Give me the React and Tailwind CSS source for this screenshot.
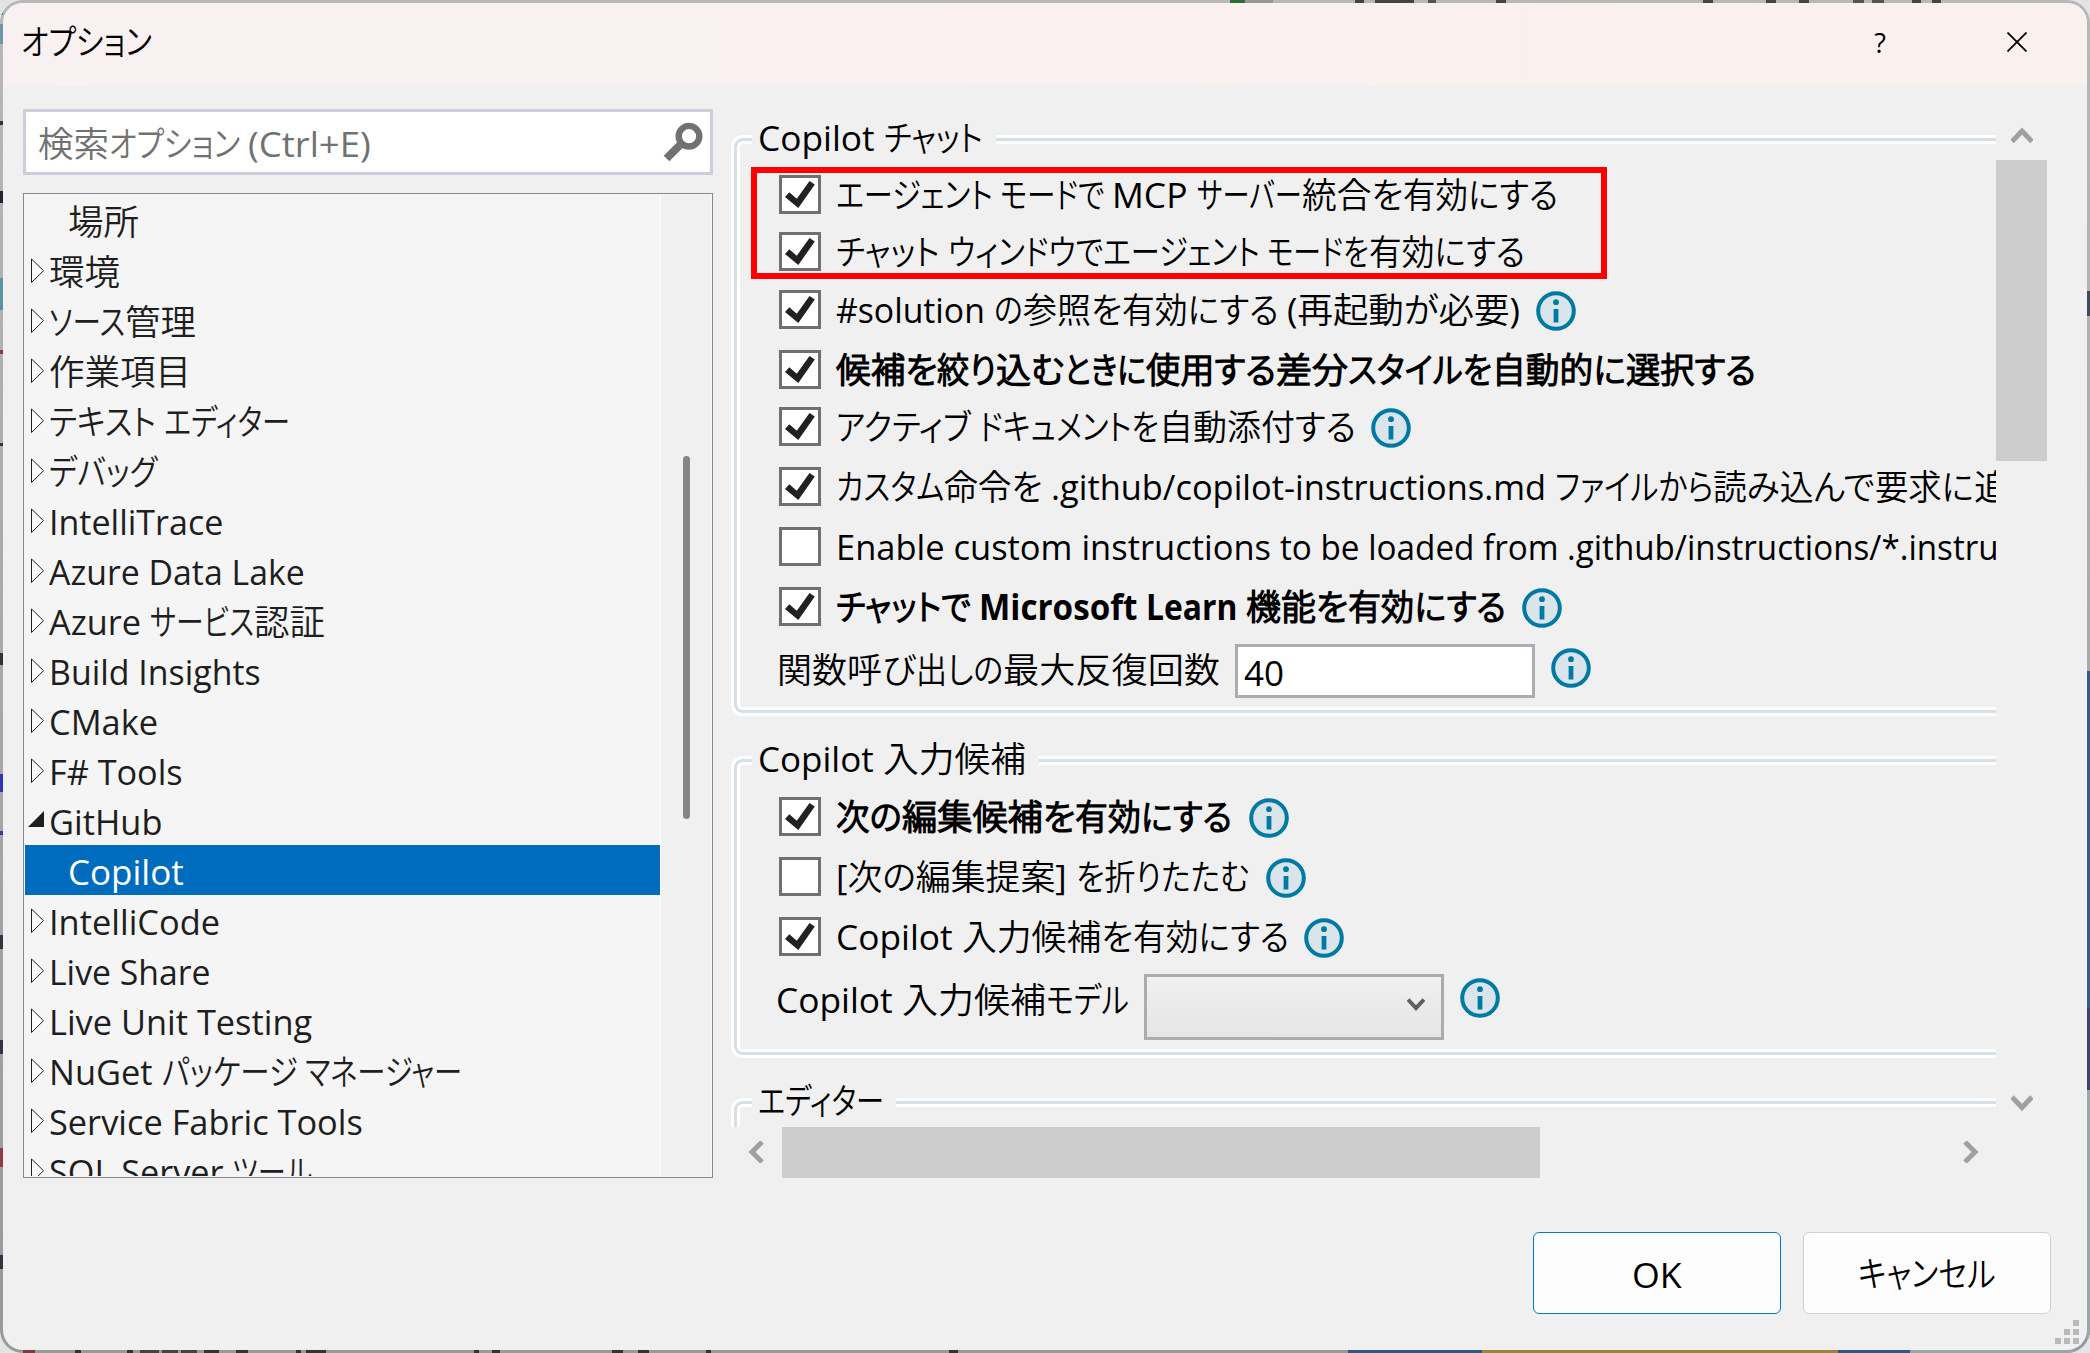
import { useLayoutEffect, useRef } from "react";

const FONT = "font-['Open_Sans','Noto_Sans_CJK_JP_DemiLight','Noto_Sans_CJK_JP',sans-serif]";

/* One run of text condensed or widened to a given width. */
function Fit({ w, className = "", children }) {
  const ref = useRef(null);
  useLayoutEffect(() => {
    const run = () => {
      const el = ref.current;
      if (!el) return;
      const natural = el.offsetWidth;
      if (natural) el.style.transform = `scaleX(${w / natural})`;
    };
    run();
    document.fonts?.ready.then(run);
  }, [w]);
  return (
    <span className="block shrink-0" style={{ width: w }}>
      <span ref={ref} className={"inline-block origin-left whitespace-pre [font-feature-settings:'palt'] " + className}>
        {children}
      </span>
    </span>
  );
}

/* A line made of consecutive runs: [text, width] pairs. */
function Line({ runs, className = "text-[35px] leading-[50px]" }) {
  return (
    <span className="flex shrink-0">
      {runs.map(([text, w], i) => (
        <Fit key={i} w={w} className={className}>{text}</Fit>
      ))}
    </span>
  );
}

const tree = [
  [[["場所", 71]], "leaf"],
  [[["環境", 71]]],
  [[["ソース", 76], ["管理", 71]]],
  [[["作業項目", 142]]],
  [[["テキスト ", 115], ["エディター", 126]]],
  [[["デバッグ", 108]]],
  [[["IntelliTrace", 174]]],
  [[["Azure Data Lake", 256]]],
  [[["Azure ", 101], ["サービス", 104], ["認証", 71]]],
  [[["Build Insights", 212]]],
  [[["CMake", 109]]],
  [[["F# Tools", 134]]],
  [[["GitHub", 113]], "open"],
  [[["Copilot", 116]], "selected"],
  [[["IntelliCode", 171]]],
  [[["Live Share", 161]]],
  [[["Live Unit Testing", 263]]],
  [[["NuGet ", 113], ["パッケージ ", 143], ["マネージャー", 157]]],
  [[["Service Fabric Tools", 314]]],
  [[["SQL Server ", 183], ["ツール", 80]]],
];

function TreeRow({ runs, kind }) {
  const child = kind === "leaf" || kind === "selected";
  return (
    <div
      className={
        "flex h-[50px] shrink-0 " +
        (kind === "selected" ? "bg-[#006cbe] text-white " : "text-[#1e1e1e] ") +
        (child ? "pl-[43px]" : "pl-[3px]")
      }
    >
      {!child && (
        <svg className="h-[50px] w-[21px] shrink-0" viewBox="0 0 21 50">
          {kind === "open" ? (
            <path d="M0 32H16V16Z" fill="#1e1e1e" />
          ) : (
            <path d="M3.5 14V37.5L15.5 25.7Z" fill="#fff" stroke="#1e1e1e" strokeWidth="1" />
          )}
        </svg>
      )}
      <Line runs={runs} className="text-[35px] leading-[54px]" />
    </div>
  );
}

function Info({ className = "" }) {
  return (
    <svg className={"size-10 shrink-0 " + className} viewBox="0 0 40 40">
      <circle cx="20" cy="20" r="17.8" fill="#d9e5ea" stroke="#007aa5" strokeWidth="4" />
      <circle cx="20" cy="11.2" r="2.9" fill="#007aa5" />
      <path d="M17.6 18H22.4V31.5H17.6Z" fill="#007aa5" />
    </svg>
  );
}

function Check({ on }) {
  return (
    <span className="h-[39px] w-[42px] shrink-0 border-3 border-[#707070] bg-white">
      {on && (
        <svg viewBox="0 0 36 33" className="h-[33px] w-9">
          <path d="M3 19L7.3 14.2L14.8 20.8L27.5 3L32.8 6.5L16.3 30Z" fill="#212121" />
        </svg>
      )}
    </span>
  );
}

function Option({ top, on = true, runs, bold, info }) {
  return (
    <div className={"flex h-[39px] shrink-0 " + top}>
      <Check on={on} />
      <div className="flex h-10 items-center pl-[15px]">
        <Line runs={runs} className={"text-[35px] leading-[50px] " + (bold ? "font-bold" : "")} />
        {info && <Info className={"mt-0.5 " + info} />}
      </div>
    </div>
  );
}

/* Group frame: white / blue-grey / white line, open at the right edge. */
function Frame({ className, children }) {
  return (
    <div className={"shrink-0 rounded-l-[12px] border-3 border-r-0 border-white " + className}>
      <div className="h-full rounded-l-[9px] border-3 border-r-0 border-[#d5dfe5]">
        <div className="flex h-full flex-col rounded-l-[6px] border-3 border-r-0 border-white">{children}</div>
      </div>
    </div>
  );
}

function Legend({ box, runs }) {
  return (
    <div className={"-mt-[31px] mb-[-3px] ml-3 h-[50px] shrink-0 bg-[#f0f0f0] pl-1.5 " + box}>
      <Line runs={runs} />
    </div>
  );
}

function Arrow({ d, className }) {
  return (
    <svg viewBox="0 0 22 22" className={"shrink-0 " + className}>
      <path d={d} fill="none" stroke="#a0a0a0" strokeWidth="5" />
    </svg>
  );
}

/* Thin slice of the editor window that stays visible around the dialog. */
const topBits = [
  [1230, 15, "#2e6f30"], [1245, 28, "#979797"], [1355, 9, "#444"], [1375, 39, "#444"], [1428, 8, "#555"],
  [1496, 10, "#444"], [1703, 10, "#444"], [1766, 10, "#444"], [1799, 10, "#444"], [1853, 11, "#555"],
  [1872, 12, "#555"], [1912, 9, "#444"], [1932, 9, "#444"],
];
const bottomBits = [
  [0, 9, "#8b1420"], [23, 12, "#7d3b3f"], [75, 6, "#333"], [127, 6, "#333"], [140, 19, "#444"], [162, 16, "#444"],
  [181, 16, "#444"], [204, 15, "#333"], [236, 12, "#333"], [296, 5, "#333"], [306, 20, "#333"], [474, 5, "#333"],
  [492, 8, "#333"], [612, 11, "#333"], [638, 11, "#333"], [706, 5, "#333"], [949, 9, "#333"], [1348, 134, "#335683"],
  [1482, 356, "#9b8340"], [1838, 72, "#335683"], [1910, 180, "#98a6a8"],
];
const leftBits = [
  [12, 3, "#2a8aa5"], [24, 20, "#6a9aa5"], [121, 4, "#333"], [191, 12, "#223"], [278, 32, "#5a94a3"],
  [350, 4, "#8a3c40"], [443, 3, "#333"], [653, 12, "#333"], [774, 18, "#3333b8"], [831, 4, "#3333b8"],
  [935, 14, "#334"], [1040, 14, "#334"], [1148, 19, "#913c40"], [1255, 14, "#334"],
];
const rightBits = [
  [291, 25, "#3c4a5a"], [671, 337, "#3e5788"], [1008, 82, "#403f70"], [1090, 250, "#98a8a8"],
];

export default function App() {
  return (
    <div className={"h-[1353px] w-[2090px] overflow-hidden bg-[#e2e4e5] text-black " + FONT}>
      <div className="relative h-[1353px] overflow-hidden rounded-[23px] bg-linear-to-b from-[#b8b8b8] to-[#999] p-[3px]">
        {topBits.map(([x, w, c]) => (
          <i key={"t" + x} className="absolute top-0 h-[3px]" style={{ left: x, width: w, background: c }} />
        ))}
        {bottomBits.map(([x, w, c]) => (
          <i key={"b" + x} className="absolute bottom-0 h-[3px]" style={{ left: x, width: w, background: c }} />
        ))}
        {leftBits.map(([y, h, c]) => (
          <i key={"l" + y} className="absolute left-0 w-[3px]" style={{ top: y, height: h, background: c }} />
        ))}
        {rightBits.map(([y, h, c]) => (
          <i key={"r" + y} className="absolute right-0 w-[3px]" style={{ top: y, height: h, background: c }} />
        ))}

        <div className="relative flex h-[1347px] w-[2084px] flex-col overflow-hidden rounded-[20px] bg-[#f0f0f0]">
          <header className="flex h-[82px] shrink-0 items-center bg-linear-to-r from-[#f9f0f1] to-[#faf1ee] pb-1 pl-[18px]">
            <Fit w={131} className="text-[35px] leading-[50px]">オプション</Fit>
            <span className="mr-[3px] ml-auto w-[16px] text-center text-[27px] leading-none">?</span>
            <svg className="mr-[60px] ml-[116px] size-5" viewBox="0 0 20 20">
              <path d="M0.5 0.5L19.5 19.5M19.5 0.5L0.5 19.5" stroke="#000" strokeWidth="1.8" />
            </svg>
          </header>

          <main className="flex h-[1093px] shrink-0">
            <aside className="ml-5 flex w-[690px] shrink-0 flex-col pt-6">
              <div className="flex h-[66px] shrink-0 items-center border-3 border-[#ccceda] bg-white pr-[7px] pl-3 text-[#717171]">
                <span className="pt-[3px]">
                  <Line runs={[["検索", 71], ["オプション ", 139], ["(Ctrl+E)", 123]]} />
                </span>
                <svg className="ml-auto h-10 w-10" viewBox="0 0 40 40">
                  <circle cx="26" cy="14.2" r="10.3" fill="none" stroke="#717171" strokeWidth="6.4" />
                  <path d="M19 21L3.5 36.5" stroke="#717171" strokeWidth="8" />
                </svg>
              </div>
              <div className="mt-[18px] flex h-[985px] shrink-0 overflow-hidden border border-[#828790] bg-[#f5f5f5] p-px">
                <div className="flex w-[635px] shrink-0 flex-col overflow-hidden">
                  {tree.map(([runs, kind], i) => (
                    <TreeRow key={i} runs={runs} kind={kind} />
                  ))}
                </div>
                <div className="flex-1 border-l border-white bg-[#f0f0f0] pt-[261px] pl-[22px]">
                  <div className="h-[363px] w-[7px] rounded-full bg-[#858585]" />
                </div>
              </div>
            </aside>

            <section className="ml-[15px] flex w-[1319px] shrink-0 flex-col">
              <div className="flex h-[1042px] shrink-0">
                <div className="flex w-[1268px] shrink-0 flex-col overflow-hidden pl-[3px]">
                  <Frame className="mt-[50px] h-[581px]">
                    <Legend box="w-[244px]" runs={[["Copilot ", 126], ["チャット", 99]]} />
                    <div className="flex flex-col pl-[39px]">
                      <Option
                        top="mt-[15px]"
                        runs={[["エージェント ", 164], ["モードで ", 112], ["MCP ", 85], ["サーバー", 105], ["統合を", 101], ["有効にする", 155]]}
                      />
                      <Option
                        top="mt-[18px]"
                        runs={[["チャット ", 112], ["ウィンドウで", 155], ["エージェント ", 164], ["モードを", 102], ["有効にする", 156]]}
                      />
                      <Option
                        top="mt-[19px]"
                        info="ml-4"
                        runs={[["#solution ", 158], ["の", 29], ["参照を", 99], ["有効にする ", 165], ["(再起動が必要)", 233]]}
                      />
                      <Option
                        top="mt-[21px]"
                        bold
                        runs={[["候補を", 101], ["絞り", 59], ["込む", 68], ["ときに", 82], ["使用する", 130], ["差分", 72], ["スタイルを", 144], ["自動的に", 134], ["選択する", 130]]}
                      />
                      <Option
                        top="mt-[18px]"
                        info="ml-[15px]"
                        runs={[["アクティブ ", 143], ["ドキュメントを", 180], ["自動添付する", 197]]}
                      />
                      <Option
                        top="mt-[21px]"
                        runs={[["カスタム", 108], ["命令を ", 107], [".github/copilot-instructions.md ", 504], ["ファイルから", 158], ["読み込んで", 162], ["要求に", 99], ["追", 36]]}
                      />
                      <Option
                        top="mt-[21px]"
                        on={false}
                        runs={[["Enable custom instructions ", 444], ["to be loaded from ", 287], [".github/instructions/*.instruc", 447]]}
                      />
                      <Option
                        top="mt-[21px]"
                        bold
                        info="ml-4"
                        runs={[["チャットで ", 143], ["Microsoft ", 167], ["Learn ", 100], ["機能を", 102], ["有効にする", 158]]}
                      />
                      <div className="-ml-0.5 mt-[18px] flex h-[54px] shrink-0">
                        <Line
                          className="text-[35px] leading-[51px]"
                          runs={[["関数呼び", 139], ["出しの", 87], ["最大反復回数", 217]]}
                        />
                        <div className="ml-[15px] flex h-[54px] w-[300px] items-center border-3 border-[#abadb3] bg-white pt-[3px] pl-[6px]">
                          <Fit w={40} className="text-[35px] leading-[50px]">40</Fit>
                        </div>
                        <Info className="mt-1 ml-4" />
                      </div>
                    </div>
                  </Frame>
                  <Frame className="mt-10 h-[302px]">
                    <Legend box="w-[287px]" runs={[["Copilot ", 125], ["入力候補", 143]]} />
                    <div className="flex flex-col pl-[39px]">
                      <Option
                        top="mt-4"
                        bold
                        info="ml-[17px]"
                        runs={[["次の", 66], ["編集候補を", 173], ["有効にする", 157]]}
                      />
                      <Option
                        top="mt-[21px]"
                        on={false}
                        info="ml-4"
                        runs={[["[次の編集提案] ", 240], ["を折りたたむ", 174]]}
                      />
                      <Option
                        top="mt-[21px]"
                        info="ml-[15px]"
                        runs={[["Copilot ", 126], ["入力候補を", 171], ["有効にする", 156]]}
                      />
                      <div className="-ml-[3px] mt-[18px] flex h-[66px] shrink-0">
                        <Line
                          className="text-[35px] leading-[51px]"
                          runs={[["Copilot ", 126], ["入力候補", 144], ["モデル", 83]]}
                        />
                        <div className="ml-[15px] flex h-[66px] w-[300px] items-center justify-end border-3 border-[#acacac] bg-linear-to-b from-[#f0f0f0] to-[#e5e5e5] pr-4">
                          <svg className="-mt-1.5 h-[13px] w-[18px]" viewBox="0 0 18 13">
                            <path d="M1 1.5L9 10L17 1.5" fill="none" stroke="#606060" strokeWidth="4" />
                          </svg>
                        </div>
                        <Info className="mt-1 ml-4" />
                      </div>
                    </div>
                  </Frame>
                  <Frame className="mt-10 h-[200px]">
                    <Legend box="w-[144px]" runs={[["エディター", 126]]} />
                  </Frame>
                </div>
                <div className="flex w-[51px] shrink-0 flex-col items-center pt-[40px]">
                  <Arrow d="M1 16.5L11 6L21 16.5" className="size-[22px]" />
                  <div className="mt-[13px] h-[301px] w-full bg-[#cdcdcd]" />
                  <Arrow d="M1 6L11 16.5L21 6" className="mt-auto mb-[14px] size-[22px]" />
                </div>
              </div>
              <div className="flex h-[51px] w-[1268px] items-center">
                <Arrow d="M16 1L6 11L16 21" className="-mt-0.5 ml-[18px] size-[22px]" />
                <div className="ml-[14px] h-full w-[758px] bg-[#cdcdcd]" />
                <Arrow d="M6 1L16 11L6 21" className="-mt-0.5 mr-[15px] ml-auto size-[22px]" />
              </div>
            </section>
          </main>

          <footer className="mt-[54px] flex justify-end gap-[22px] pr-9">
            <div className="flex h-[82px] w-[248px] items-center justify-center rounded-md border border-[#0078d4] bg-[#fdfdfd] pt-1">
              <Fit w={50} className="text-[35px] leading-[50px]">OK</Fit>
            </div>
            <div className="flex h-[82px] w-[248px] items-center justify-center rounded-md border border-[#d0d0d0] bg-[#fdfdfd] pt-0.5">
              <Fit w={138} className="text-[35px] leading-[50px]">キャンセル</Fit>
            </div>
          </footer>

          <svg className="absolute right-2 bottom-1.5 size-6" viewBox="0 0 24 24" fill="#bababa">
            <path d="M18 0h6v6h-6zM9 9h6v6h-6zM18 9h6v6h-6zM0 18h6v6h-6zM9 18h6v6h-6zM18 18h6v6h-6z" />
          </svg>
          <div className="absolute top-[164px] left-[748px] h-[112px] w-[856px] border-6 border-[#ff0000]" />
        </div>
      </div>
    </div>
  );
}
